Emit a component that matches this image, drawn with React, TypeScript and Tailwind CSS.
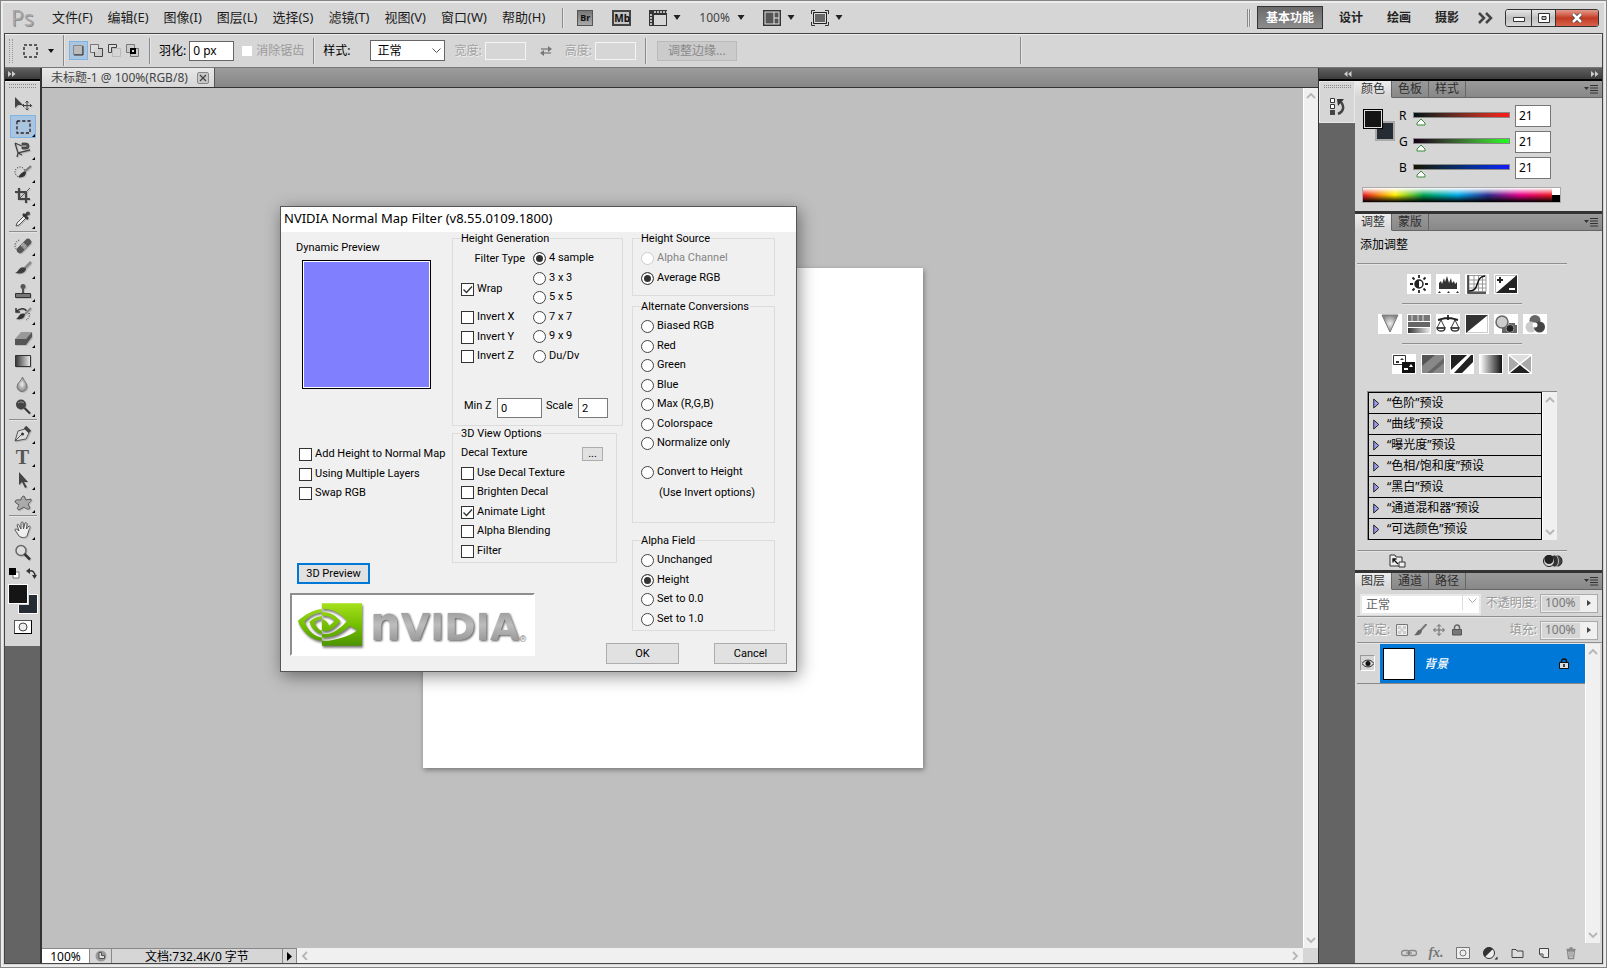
import React from "react";
import clsx from "clsx";

type IconProps = { children: React.ReactNode; w?: number; h?: number; className?: string };

function Icon({ children, w = 18, h = 18, className }: IconProps) {
  return (
    <svg width={w} height={h} viewBox={`0 0 ${w} ${h}`} fill="none" className={clsx("shrink-0", className)} aria-hidden="true">
      {children}
    </svg>
  );
}

function Arrow() {
  return (
    <Icon w={8} h={5}>
      <path d="M0.5 0h7L4 5z" fill="#222" />
    </Icon>
  );
}

function Divider({ className }: { className?: string }) {
  return <div className={clsx("w-[2px] shrink-0 border-l border-[#8a8a8a] bg-[#e6e6e6]", className)} />;
}

function Rule({ className }: { className?: string }) {
  return <div className={clsx("h-[2px] shrink-0 border-t border-[#8f8f8f] bg-[#e4e4e4]", className)} />;
}

const menus = ["文件(F)", "编辑(E)", "图像(I)", "图层(L)", "选择(S)", "滤镜(T)", "视图(V)", "窗口(W)", "帮助(H)"];

function MenuBar() {
  return (
    <header className="flex h-[31px] shrink-0 items-center pl-[7px] text-[13px] text-[#1c1c1c]">
      <span className="w-[41px] font-['Open_Sans'] text-[21px] leading-6 text-[#a9a9a9] [text-shadow:1px_1px_0_#8b8b8b]">Ps</span>
      <nav className="flex gap-[15px]">
        {menus.map((m) => (
          <button key={m} className="whitespace-nowrap">{m}</button>
        ))}
      </nav>
      <Divider className="ml-[17px] h-5" />
      <button aria-label="Bridge" className="ml-[13px] h-4 w-4 border border-[#555] bg-linear-to-b from-[#777] to-[#a9a9a9] text-[9px] leading-[14px] font-bold text-[#111]">Br</button>
      <button aria-label="Mini Bridge" className="ml-[19px] h-4 w-[19px] border-2 border-[#444] bg-[#c4c4c4] text-[10px] leading-3 font-bold text-[#111]">Mb</button>
      <button aria-label="查看额外内容" className="ml-[18px] flex items-center gap-1.5">
        <Icon h={16}>
          <path d="M0 0h18v16H0z" fill="#333" />
          <path d="M5 5h12v10H5z" fill="#d6d6d6" />
          <path d="M5 2h13M2 4v12" stroke="#bbb" strokeWidth="2" strokeDasharray="2 1" />
        </Icon>
        <Arrow />
      </button>
      <button className="ml-[18px] flex items-center gap-[7px] text-xs text-[#444]">100% <Arrow /></button>
      <button aria-label="排列文档" className="ml-[18px] flex items-center gap-1.5">
        <Icon h={16}>
          <path d="M.75.75h16.5v14.5H.75z" fill="#e8e8e8" stroke="#333" strokeWidth="1.5" />
          <path d="M2.500 2.500h8v11h-8zM11.500 2.500h4v5h-4zM11.500 8.500h4v5h-4z" fill="#555" />
        </Icon>
        <Arrow />
      </button>
      <button aria-label="屏幕模式" className="ml-4 flex items-center gap-1.5">
        <Icon h={16}>
          <path d="M.5 4V.5H4M14 .5h3.500V4M17.500 12v3.500H14M4 15.500H.5V12" stroke="#333" />
          <path d="M2.500 2.500h13v11h-13z" fill="#666" stroke="#222" />
          <path d="M3.500 3.500h11v9h-11z" stroke="#ddd" />
        </Icon>
        <Arrow />
      </button>
      <div className="ml-auto flex items-center text-xs font-bold text-[#222]">
        <Divider className="h-[18px]" />
        <Divider className="h-[18px]" />
        <button className="ml-[6px] h-[23px] w-[66px] border border-[#333] bg-linear-to-b from-[#6a6a6a] to-[#8d8d8d] text-white">基本功能</button>
        <button className="ml-4">设计</button>
        <button className="ml-6">绘画</button>
        <button className="ml-6">摄影</button>
        <button aria-label="更多" className="ml-[19px]">
          <Icon w={15} h={12}>
            <path d="M1 1l5 5-5 5M8 1l5 5-5 5" stroke="#444" strokeWidth="2.500" />
          </Icon>
        </button>
        <div className="mr-1 ml-3 flex h-[18px] overflow-hidden rounded-[3px] border border-[#333]">
          <button aria-label="最小化" className="flex w-[25px] items-center justify-center bg-linear-to-b from-[#e6e6e6] via-[#c0c0c0] to-[#d8d8d8] pt-1">
            <Icon w={12} h={5}><path d="M.5.5h11v4H.5z" fill="#fff" stroke="#333" /></Icon>
          </button>
          <button aria-label="还原" className="flex w-[25px] items-center justify-center border-x border-[#333] bg-linear-to-b from-[#e6e6e6] via-[#c0c0c0] to-[#d8d8d8]">
            <Icon w={12} h={10}><path d="M.5.5h11v9H.5zM4 3.500h4v3H4z" fill="#fff" stroke="#333" fillRule="evenodd" /></Icon>
          </button>
          <button aria-label="关闭" className="flex w-[42px] items-center justify-center bg-linear-to-b from-[#e39a8c] via-[#c13a22] to-[#d8624a]">
            <Icon w={12} h={10}>
              <path d="M2 1l8 8M10 1L2 9" stroke="#444" strokeWidth="4" />
              <path d="M2 1l8 8M10 1L2 9" stroke="#fff" strokeWidth="2.500" />
            </Icon>
          </button>
        </div>
      </div>
    </header>
  );
}

function OptionsBar() {
  return (
    <div className="flex h-[34px] shrink-0 items-center border-t border-[#444] bg-[#d6d6d6] pl-1 text-xs text-black shadow-[inset_0_1px_0_#eee]">
      <div className="h-6 w-1 border-x border-dotted border-[#999]" />
      <button aria-label="矩形选框工具" className="ml-[10px] flex items-center gap-2.5">
        <Icon w={15} h={14}><path d="M1 1h13v12H1z" stroke="#333" strokeWidth="1.500" strokeDasharray="3 2" /></Icon>
        <Icon w={6} h={4}><path d="M0 0h6L3 4z" fill="#111" /></Icon>
      </button>
      <Divider className="ml-[9px] h-[31px]" />
      <button aria-label="新选区" className="ml-1 flex h-[19px] w-[19px] items-center justify-center border border-[#7db4e4] bg-[#a9c5e0]">
        <Icon w={11} h={11}><path d="M.5.5h9v9h-9z" fill="#bbb" stroke="#888" /><path d="M10 1v9H1" stroke="#333" /></Icon>
      </button>
      <button aria-label="添加到选区" className="ml-[2px]">
        <Icon w={14} h={14}><path d="M.5.5h8v8h-8z" fill="#ddd" stroke="#777" /><path d="M4.500 4.500h8v8h-8z" fill="#ccc" stroke="#444" /><path d="M4 4h4v4H4z" fill="#d4d4d4" /></Icon>
      </button>
      <button aria-label="从选区减去" className="ml-1">
        <Icon w={14} h={14}><path d="M4.500 4.500h8v8h-8z" stroke="#bbb" /><path d="M8.500.5h-8v8h3v-5h5z" fill="#ddd" stroke="#444" /></Icon>
      </button>
      <button aria-label="与选区交叉" className="ml-1">
        <Icon w={14} h={14}><path d="M.5.5h8v8h-8zM4.500 4.500h8v8h-8z" fill="#ccc" stroke="#777" /><path d="M5 5h4v4H5z" fill="#ddd" stroke="#000" strokeWidth="2" /></Icon>
      </button>
      <Divider className="ml-[9px] h-[26px]" />
      <label className="ml-2 flex items-center gap-[3px]">
        羽化:
        <input defaultValue="0 px" className="h-5 w-[45px] border border-[#666] bg-white px-[3px]" />
      </label>
      <label className="ml-2 flex items-center gap-1 text-[#9a9a9a]">
        <input type="checkbox" disabled className="h-[10px] w-[10px] appearance-none bg-white" />
        消除锯齿
      </label>
      <Divider className="ml-[9px] h-[26px]" />
      <label className="ml-2 flex items-center">
        样式:
        <span className="relative ml-5">
          <select className="h-[21px] w-[75px] appearance-none border border-[#666] bg-white pl-1.5 text-xs">
            <option>正常</option>
          </select>
          <Icon w={9} h={6} className="pointer-events-none absolute top-2 right-1"><path d="M.5.5l4 4 4-4" stroke="#555" /></Icon>
        </span>
      </label>
      <label className="ml-[9px] flex items-center gap-[3px] text-[#a3a3a3] [text-shadow:1px_1px_0_#eee]">
        宽度:
        <input disabled className="h-[18px] w-[41px] border border-[#f4f4f4] bg-[#d6d6d6]" />
      </label>
      <button aria-label="高度和宽度互换" className="ml-[14px]">
        <Icon w={12} h={10}><path d="M1 3h8M1 7h10" stroke="#888" strokeWidth="1.500" /><path d="M8 0l4 3-4 3zM4 4L0 7l4 3z" fill="#777" /></Icon>
      </button>
      <label className="ml-[13px] flex items-center gap-[3px] text-[#a3a3a3] [text-shadow:1px_1px_0_#eee]">
        高度:
        <input disabled className="h-[18px] w-[41px] border border-[#f4f4f4] bg-[#d6d6d6]" />
      </label>
      <Divider className="ml-[9px] h-[26px]" />
      <button disabled className="ml-2.5 h-5 w-20 border border-[#bababa] bg-[#cbcbcb] text-[#8a8a8a]">调整边缘...</button>
      <Divider className="ml-[283px] h-[27px]" />
    </div>
  );
}

const shade = "drop-shadow-[1px_1px_0_#bbb]";

const tools: { name: string; draw: React.ReactNode }[][] = [
  [
    { name: "移动工具", draw: <><path d="M1 2v11l3-3h5z" fill="#444" /><path d="M13 6v9M8.500 10.500h9M11.500 7.500L13 6l1.500 1.500M11.500 13.500L13 15l1.500-1.500M10 9l-1.500 1.500L10 12M16 9l1.500 1.500L16 12" stroke="#444" /></> },
    { name: "矩形选框工具", draw: <path d="M3 3h13v12H3z" stroke="#223" strokeWidth="1.300" strokeDasharray="3.200 2" /> },
    { name: "磁性套索工具", draw: <><path d="M1 2l3 10 12-3M1 2l7 3M4 12l-1 4M4 12l4 2" stroke="#444" strokeWidth="1.300" /><path d="M8 2h4a3 3 0 010 6H8V6h4a1 1 0 000-2H8z" fill="#555" stroke="#333" strokeWidth=".7" /></> },
    { name: "快速选择工具", draw: <><circle cx="6" cy="8" r="5" stroke="#222" strokeDasharray="1 1.500" /><path d="M17 2l-7 6" stroke="#777" strokeWidth="2" /><path d="M12 8c0 5-5 6-8 5 2-1 3-6 8-5z" fill="#333" /></> },
    { name: "裁剪工具", draw: <><path d="M5 1v11h11M1 5h11v11" stroke="#444" strokeWidth="2.200" /><path d="M5 12L16 1" stroke="#555" /></> },
    { name: "吸管工具", draw: <><path d="M2 16l1-3 7-7 2 2-7 7z" fill="#eee" stroke="#555" /><path d="M9 4l5 5M11 6l3-3" stroke="#333" strokeWidth="2.500" /><circle cx="14" cy="3.500" r="2" fill="#444" /></> },
  ],
  [
    { name: "污点修复画笔工具", draw: <><path d="M7 14A5.500 5.500 0 016 3" stroke="#222" strokeDasharray="1 1.500" /><path d="M6 13l8-8" stroke="#555" strokeWidth="6.500" strokeLinecap="round" /><path d="M8.500 10.500l3-3" stroke="#aaa" strokeWidth="5.500" /><path d="M8.500 9l3 3M10 7.500l3 3" stroke="#555" strokeDasharray="1 1.200" /></> },
    { name: "画笔工具", draw: <><path d="M17 2l-6 6" stroke="#888" strokeWidth="2.500" /><path d="M12 8c0 6-7 6-11 5 4-1 4-8 11-5z" fill="#3c3c3c" /></> },
    { name: "仿制图章工具", draw: <><circle cx="9" cy="3.500" r="2.500" fill="#555" /><path d="M8 5h2v5H8z" fill="#555" /><path d="M1.500 10.500h15v4h-15z" fill="#777" stroke="#333" /></> },
    { name: "历史记录画笔工具", draw: <><path d="M3 5c4-4 9-2 9 0M2 2v4h4" stroke="#333" strokeWidth="1.500" /><path d="M17 2l-6 6" stroke="#888" strokeWidth="2" /><path d="M11 8c0 5-6 6-9 5 3-1 3-7 9-5z" fill="#333" /><path d="M15 7c1 4-1 6-3 7" stroke="#222" strokeDasharray="1 1.500" /></> },
    { name: "橡皮擦工具", draw: <><path d="M1 10l6-7h11l-6 7z" fill="#999" /><path d="M1 10h11v6H1zM12 10l6-7v5l-6 8z" fill="#555" /></> },
    { name: "渐变工具", draw: <path d="M1.500 3.500h15v11h-15z" fill="url(#toolGrad)" stroke="#333" /> },
    { name: "模糊工具", draw: <path d="M8.500 2c1 4 4.500 6 4.500 9.500a4.500 4.500 0 01-10 0C3 8 7.500 6 8.500 2z" fill="url(#ball)" stroke="#777" /> },
    { name: "减淡工具", draw: <><circle cx="7" cy="6.500" r="5" fill="#444" /><path d="M10.500 10l5.500 5.500" stroke="#333" strokeWidth="2" /><path d="M4 5a4 3 0 016 0" stroke="#999" /></> },
  ],
  [
    { name: "钢笔工具", draw: <><path d="M1 16l3-10 7-2 4 4-3 6z" fill="#ddd" stroke="#555" /><path d="M1 16l7-7" stroke="#555" /><circle cx="8.500" cy="9" r="1.500" fill="#333" /><path d="M11 2l5 5" stroke="#444" strokeWidth="3.500" /></> },
    { name: "横排文字工具", draw: null },
    { name: "路径选择工具", draw: <path d="M5 1v13l3-3 3 6 2-1-3-5h4z" fill="#444" /> },
    { name: "自定形状工具", draw: <path d="M10 2l2 4 5-1c1 2-2 4-3 5l2 4c-1 2-4 1-6-1l-5 3c-3-1-1-3 0-5L1 8c0-3 4-2 6-2 0-2 1-4 3-4z" fill="#aaa" stroke="#555" /> },
  ],
  [
    { name: "抓手工具", draw: <path d="M5 15l-4-6c0-2 2-1 4 1L3 4c1-2 2 0 4 4V2c1-2 2-1 2 0l.5 6L11 2c1-1 2 0 2 1l-.5 5L15 5c2 0 1 2 0 4l-2 6c-1 2-6 2-8 0z" fill="#eee" stroke="#555" /> },
    { name: "缩放工具", draw: <><circle cx="7" cy="6.500" r="5" fill="#ddd" stroke="#666" strokeWidth="1.500" /><path d="M10.500 10l5.500 5.500" stroke="#333" strokeWidth="2.500" /></> },
  ],
];

function Toolbox() {
  return (
    <aside className="flex w-[37px] shrink-0 flex-col border-r-2 border-[#333] bg-[#646464]">
      <div className="flex h-[13px] shrink-0 items-center border-b-2 border-black bg-linear-to-b from-[#606060] to-[#3c3c3c] pl-[3px]">
        <Icon w={8} h={6}><path d="M0 0l3.500 3L0 6zM4 0l3.500 3L4 6z" fill="#ccc" /></Icon>
      </div>
      <div className="flex flex-col items-center border-t border-[#eee] bg-[#d6d6d6] pb-3">
        <div className="mt-[2px] mb-1 h-1 w-[27px] border-y border-dotted border-[#888]" />
        {tools.map((group, g) => (
          <React.Fragment key={g}>
            {g > 0 && <Rule className="my-px w-7" />}
            {group.map((tool, i) => (
              <button
                key={tool.name}
                aria-label={tool.name}
                className={clsx(
                  "relative flex h-[23px] w-[26px] items-center justify-center border",
                  g === 0 && i === 1 ? "border-[#7db4e4] bg-[#a9c5e0]" : "border-transparent",
                )}
              >
                {tool.draw ? (
                  <Icon className={shade}>{tool.draw}</Icon>
                ) : (
                  <span className="font-['Liberation_Serif'] text-[20px] leading-5 font-bold text-[#555]">T</span>
                )}
                {!(g === 0 && i === 0) && !(g === 3 && i === 1) && (
                  <Icon w={3} h={3} className="absolute right-0 bottom-0"><path d="M3 0v3H0z" fill="#000" /></Icon>
                )}
              </button>
            ))}
          </React.Fragment>
        ))}
        <div className="mt-1 flex w-7 justify-between">
          <Icon w={11} h={11}><path d="M4 4h6v6H4z" fill="#fff" stroke="#777" /><path d="M0 0h7v7H0z" fill="#000" /></Icon>
          <Icon w={11} h={11}><path d="M2 3c5-1 7 1 7 6" stroke="#333" strokeWidth="1.500" /><path d="M4 0v6L0 3zM6 7h5l-2.500 4z" fill="#333" /></Icon>
        </div>
        <div className="mt-[5px] grid h-[30px] w-[30px]">
          <div className="col-start-1 row-start-1 h-5 w-5 self-end justify-self-end border border-white bg-[#262c34]" />
          <div className="z-10 col-start-1 row-start-1 h-5 w-5 border border-white bg-[#151515] outline outline-[#d6d6d6]" />
        </div>
        <button aria-label="以快速蒙版模式编辑" className="mt-[6px] flex h-3.5 w-[18px] items-center justify-center border border-[#555] border-r-black border-b-black bg-white">
          <Icon w={10} h={10}><circle cx="5" cy="5" r="4" fill="#eee" stroke="#444" /></Icon>
        </button>
      </div>
    </aside>
  );
}

function Chevron({ dir }: { dir: "up" | "down" | "left" | "right" }) {
  const d = { up: "M1 6l4-4 4 4", down: "M1 3l4 4 4-4", left: "M7 1L3 5l4 4", right: "M3 1l4 4-4 4" }[dir];
  return <Icon w={10} h={9}><path d={d} stroke="#b5b5b5" strokeWidth="1.800" /></Icon>;
}

function ScrollBar({ className }: { className?: string }) {
  return (
    <div className={clsx("flex w-[15px] shrink-0 flex-col items-center justify-between border-l border-white bg-[#f0f0f0] py-1", className)}>
      <Chevron dir="up" />
      <Chevron dir="down" />
    </div>
  );
}

function DocumentArea() {
  return (
    <main className="flex min-w-0 flex-1 flex-col border-r border-[#333]">
      <div className="flex h-[20px] shrink-0 border-b border-[#333] bg-linear-to-b from-[#9c9c9c] to-[#868686]">
        <div className="flex w-[173px] items-center justify-between border-r border-[#555] bg-linear-to-b from-[#e8e8e8] to-[#d6d6d6] pr-[5px] pl-[9px] text-xs text-[#444]">
          <span className="whitespace-nowrap">未标题-1 @ 100%(RGB/8)</span>
          <button aria-label="关闭文档" className="flex h-3 w-3 shrink-0 items-center justify-center rounded-[2px] border border-[#888] bg-[#c8c8c8]">
            <Icon w={8} h={8}><path d="M1 1l6 6M7 1L1 7" stroke="#444" strokeWidth="1.300" /></Icon>
          </button>
        </div>
      </div>
      <div className="flex min-h-0 flex-1">
        <div className="flex flex-1 items-center justify-center bg-[#bfbfbf]">
          <div className="h-[500px] w-[500px] bg-white shadow-[1px_2px_5px_#777]" />
        </div>
        <ScrollBar />
      </div>
      <footer className="flex h-[15px] shrink-0 items-stretch bg-[#f0f0f0] text-xs leading-[15px] text-black">
        <input aria-label="缩放" defaultValue="100%" className="w-[48px] border-t border-r border-[#888] bg-white text-center" />
        <button aria-label="Version Cue" className="flex w-[22px] items-center justify-center border-t border-r border-[#888] bg-[#d6d6d6]">
          <Icon w={12} h={12}><circle cx="6" cy="6" r="5.500" fill="#999" /><path d="M4 2.500h2.500v3h3v3H4z" fill="#ddd" stroke="#555" /></Icon>
        </button>
        <div className="w-[171px] border-t border-r border-[#888] bg-[#d6d6d6] text-center">文档:732.4K/0 字节</div>
        <button aria-label="状态栏选项" className="flex w-[14px] items-center justify-center border-t border-r border-[#888] bg-[#d6d6d6]">
          <Icon w={5} h={9}><path d="M0 0l5 4.500L0 9z" fill="#000" /></Icon>
        </button>
        <div className="flex flex-1 items-center justify-between px-[3px]">
          <Chevron dir="left" />
          <Chevron dir="right" />
        </div>
        <div className="w-[15px] bg-[#d6d6d6]" />
      </footer>
    </main>
  );
}

function PanelTabs({ tabs }: { tabs: string[] }) {
  return (
    <div className="flex h-[17px] shrink-0 items-stretch bg-linear-to-b from-[#9a9a9a] to-[#878787] text-xs leading-4">
      {tabs.map((tab, i) => (
        <button
          key={tab}
          className={clsx(
            "w-[37px] border-r border-b border-r-[#666]",
            i === 0 ? "border-b-[#d6d6d6] bg-linear-to-b from-[#eee] to-[#d6d6d6] text-[#333]" : "border-b-[#666] text-[#2e2e2e]",
          )}
        >
          {tab}
        </button>
      ))}
      <div className="flex flex-1 items-center justify-end border-b border-[#666] pr-1">
        <Icon w={14} h={9}><path d="M0 2h5L2.500 5z" fill="#333" /><path d="M6 .5h8M6 3h8M6 5.500h8M6 8h8" stroke="#333" /></Icon>
      </div>
    </div>
  );
}

const channels = [
  { name: "R", bar: "from-[#001515] to-[#ff1515]" },
  { name: "G", bar: "from-[#150015] to-[#15ff15]" },
  { name: "B", bar: "from-[#151500] to-[#1515ff]" },
];

function ColorPanel() {
  return (
    <section>
      <PanelTabs tabs={["颜色", "色板", "样式"]} />
      <div className="flex pt-[7px] pl-2">
        <div className="mt-1 grid h-8 w-8">
          <div className="col-start-1 row-start-1 h-5 w-5 self-end justify-self-end border-2 border-[#aaa] bg-[#262c34]" />
          <div className="z-10 col-start-1 row-start-1 h-5 w-5 border border-black bg-[#151515] shadow-[inset_0_0_0_1px_#ddd]" />
        </div>
        <div className="ml-1 flex flex-col gap-1">
          {channels.map((c) => (
            <label key={c.name} className="flex h-[22px] items-center text-xs text-black">
              <span className="w-[14px]">{c.name}</span>
              <span className="flex w-[97px] flex-col pt-[5px]">
                <span className={clsx("h-[6px] border border-[#888] bg-linear-to-r", c.bar)} />
                <Icon w={10} h={8} className="ml-[3px]"><path d="M5 1l4 4v2H1V5z" fill="#fff" stroke="#3b8a3b" /></Icon>
              </span>
              <input defaultValue="21" className="ml-[5px] h-[22px] w-9 border border-[#777] bg-white pb-0.5 pl-[3px]" />
            </label>
          ))}
        </div>
      </div>
      <div className="my-2 ml-[7px] flex h-[16px] w-[199px] border border-[#aaa]">
        <div className="flex-1 bg-[linear-gradient(to_bottom,white,transparent_50%,black),linear-gradient(to_right,#ed1c24,#fff200_17%,#00a651_32%,#00aeef_50%,#2e3192_66%,#ec008c_83%,#ed1c24)]" />
        <div className="w-2 bg-linear-to-b from-white from-50% to-black to-50%" />
      </div>
    </section>
  );
}

const adjustments: { name: string; draw: React.ReactNode }[][] = [
  [
    { name: "亮度/对比度", draw: <><circle cx="12" cy="10" r="4" fill="#fff" stroke="#222" strokeWidth="1.500" /><path d="M12 6a4 4 0 000 8z" fill="#222" /><path d="M12 1v3M12 16v3M3 10h3M18 10h3M5.500 3.500l2 2M16.500 14.500l2 2M18.500 3.500l-2 2M7.500 14.500l-2 2" stroke="#222" strokeWidth="1.800" /></> },
    { name: "色阶", draw: <><path d="M3 15V9l2-2 1 3 2-6 1 4 2-6 2 7 2-5 1 5 2-2 1 3 2-2v7z" fill="#333" /><path d="M2 19l1.500-2L5 19zM11 19l1.500-2 1.500 2zM20 19l1.500-2 1.500 2z" fill="#333" /></> },
    { name: "曲线", draw: <><path d="M4 1.500h17v16H4zM9 1v17M13.500 1v17M17.500 1v17M4 6h17M4 10h17M4 14h17" stroke="#999" /><path d="M4 17c12 0 5-14 16-15" stroke="#111" strokeWidth="1.500" /><path d="M3 1v18h18" stroke="#222" strokeWidth="1.500" /></> },
    { name: "曝光度", draw: <><path d="M1.500 1.500h21v17h-21z" stroke="#bbb" /><path d="M23 1v18H2z" fill="#222" /><path d="M3 6h6M6 3v6" stroke="#222" strokeWidth="2" /><path d="M15 15h6" stroke="#fff" strokeWidth="2" /></> },
  ],
  [
    { name: "自然饱和度", draw: <path d="M4 1h16l-8 17z" fill="url(#ball)" stroke="#777" /> },
    { name: "色相/饱和度", draw: <><path d="M1 1h22v6H1z" fill="#777" /><path d="M5 1v6M11 1v6M16 1v6" stroke="#aaa" strokeWidth="2" /><path d="M1 8h22v5H1z" fill="#666" /><path d="M1 14h22v5H1z" fill="url(#toolGrad)" /></> },
    { name: "色彩平衡", draw: <><path d="M12 1v5M2 6c5-1 5-2 10-2s5 1 10 2" stroke="#222" strokeWidth="1.800" /><path d="M5 6l-4 8h8zM19 6l-4 8h8z" stroke="#333" /><path d="M1 14h8c0 4-8 4-8 0zM15 14h8c0 4-8 4-8 0z" stroke="#333" strokeWidth="1.300" /></> },
    { name: "黑白", draw: <><path d="M1.500 1.500h21v17h-21z" fill="#fff" stroke="#ccc" /><path d="M1 1h22L1 19z" fill="#333" /></> },
    { name: "照片滤镜", draw: <><path d="M8 11h15v8H8zM15 9h6v3h-6z" fill="#666" /><circle cx="8" cy="8" r="6" fill="#ccc" stroke="#666" strokeWidth="1.500" /><circle cx="16" cy="14.500" r="4" fill="#222" stroke="#999" /></> },
    { name: "通道混合器", draw: <><circle cx="12" cy="6.500" r="5.500" fill="#666" /><circle cx="8" cy="13" r="5.500" fill="#ccc" /><circle cx="16.500" cy="13" r="5.500" fill="#444" /><circle cx="12" cy="11" r="2.500" fill="#fff" /></> },
  ],
  [
    { name: "反相", draw: <><path d="M1.500 1.500h12v9h-12z" fill="#fff" stroke="#333" /><path d="M4 7h3v2H4zM8 6l2-2 2 2z" fill="#333" /><path d="M10 8h13v11H10z" fill="#111" /><path d="M12 14h4v2h-4zM17 13l2-3 2 3z" fill="#fff" /></> },
    { name: "色调分离", draw: <><path d="M1 1h22v18H1z" fill="#888" /><path d="M1 1h13L1 12z" fill="#555" /><path d="M23 4v5L11 19H6z" fill="#666" /></> },
    { name: "阈值", draw: <><path d="M1 1h16L1 16zM21 1h2v7L12 19H4z" fill="#222" /></> },
    { name: "渐变映射", draw: <path d="M1 1h22v18H1z" fill="url(#mapGrad)" /> },
    { name: "可选颜色", draw: <><path d="M1 1h22v18H1z" fill="#aaa" /><path d="M1 19l11-9 11 9z" fill="#222" /><path d="M1 1h22l-11 9z" fill="#ddd" /><path d="M1 1l22 18M23 1L1 19" stroke="#fff" strokeWidth="1.500" /></> },
  ],
];

const presets = ["“色阶”预设", "“曲线”预设", "“曝光度”预设", "“色相/饱和度”预设", "“黑白”预设", "“通道混和器”预设", "“可选颜色”预设"];

function AdjustmentsPanel() {
  return (
    <section className="border-t-[3px] border-[#333]">
      <PanelTabs tabs={["调整", "蒙版"]} />
      <div className="ml-[2px] flex w-[210px] flex-col items-center">
        <h2 className="mt-1.5 w-full pl-[3px] text-xs leading-4 text-black">添加调整</h2>
        <Rule className="mt-[10px] mb-[9px] w-full" />
        {adjustments.map((row, r) => (
          <React.Fragment key={r}>
            {r > 0 && <Rule className="my-[9px] w-[120px]" />}
            <div className="flex gap-[5px]">
              {row.map((a) => (
                <button key={a.name} aria-label={a.name} className="bg-white">
                  <Icon w={24} h={20}>{a.draw}</Icon>
                </button>
              ))}
            </div>
          </React.Fragment>
        ))}
        <div className="mt-[17px] flex w-[190px] border-t border-l border-[#888]">
          <ul className="flex-1 border border-black">
            {presets.map((p) => (
              <li key={p} className="border-b border-black last:border-b-0">
                <button className="flex h-5 w-full items-center gap-[7px] pl-1 text-left text-xs whitespace-nowrap text-black">
                  <Icon w={7} h={11}><path d="M.75 1v9l5-4.500z" fill="#9a9af0" stroke="#222" /></Icon>
                  {p}
                </button>
              </li>
            ))}
          </ul>
          <ScrollBar />
        </div>
        <Rule className="mt-[10px] w-full" />
        <div className="flex h-[18px] w-full items-center justify-between pr-1 pl-8">
          <Icon w={17} h={14}><path d="M1 1h5l1 2h6v9H1z" fill="#eee" stroke="#333" /><path d="M4 5l5 5M4 8.500V5h3.500" stroke="#111" strokeWidth="1.300" /><path d="M10 8h6v5h-6z" fill="#eee" stroke="#333" /></Icon>
          <Icon w={20} h={14}><ellipse cx="15" cy="7" rx="4" ry="5" fill="#444" stroke="#222" /><ellipse cx="11.500" cy="7" rx="4" ry="6" fill="#333" stroke="#bbb" /><circle cx="6" cy="7" r="5.500" fill="#ddd" stroke="#222" /><circle cx="6" cy="5.500" r="4.500" fill="#222" /></Icon>
        </div>
      </div>
    </section>
  );
}

function Percent({ label }: { label: string }) {
  return (
    <label className="ml-auto flex items-center gap-[3px] text-xs text-[#999] [text-shadow:1px_1px_0_#fff]">
      {label}
      <span className="flex h-[19px] w-[58px] border border-[#aaa] bg-[#f0f0f0]">
        <input defaultValue="100%" className="w-10 border border-[#eee] bg-[#d6d6d6] pl-[3px] text-[#777]" />
        <span className="flex flex-1 items-center justify-center">
          <Icon w={4} h={6}><path d="M0 0l4 3-4 3z" fill="#444" /></Icon>
        </span>
      </span>
    </label>
  );
}

const layerActions: { name: string; draw: React.ReactNode }[] = [
  { name: "链接图层", draw: <><rect x=".5" y="4.500" width="8" height="5" rx="2.500" stroke="#888" strokeWidth="1.300" /><rect x="7.500" y="4.500" width="8" height="5" rx="2.500" stroke="#888" strokeWidth="1.300" /><path d="M5 7h6" stroke="#777" /></> },
  { name: "添加图层样式", draw: null },
  { name: "添加图层蒙版", draw: <><path d="M1.500 1.500h13v11h-13z" fill="#eee" stroke="#777" /><circle cx="8" cy="7" r="3" stroke="#777" /></> },
  { name: "创建新的填充或调整图层", draw: <><circle cx="7" cy="7" r="5.500" fill="#eee" stroke="#333" /><path d="M3 11l8-8a5.500 5.500 0 00-8 8z" fill="#333" /><path d="M15.500 10.500v3h-3z" fill="#222" /></> },
  { name: "创建新组", draw: <path d="M3 3.500h4l1 1.500h6v6.500H3z" fill="#ddd" stroke="#444" /> },
  { name: "创建新图层", draw: <path d="M3.500 2.500h9v9H7L3.500 8zM3.500 8H7v3.500" fill="#eee" stroke="#444" /> },
  { name: "删除图层", draw: <><path d="M4.500 5h7l-1 7.500h-5zM3.500 3.500h9M6.500 2h3" stroke="#888" strokeWidth="1.300" /><path d="M7 6v5M9 6v5" stroke="#888" /></> },
];

function LayersPanel() {
  return (
    <section className="flex min-h-0 flex-1 flex-col border-t-[3px] border-[#333]">
      <PanelTabs tabs={["图层", "通道", "路径"]} />
      <div className="flex h-[26px] items-center pr-1 pl-[5px]">
        <span className="relative">
          <select aria-label="混合模式" disabled className="h-[21px] w-[121px] appearance-none border-2 border-[#e8e8e8] bg-white pl-1 text-xs text-[#666] opacity-100">
            <option>正常</option>
          </select>
          <span className="pointer-events-none absolute top-0.5 right-0 flex h-[17px] w-[19px] items-center justify-center border-l border-[#ddd]">
            <Icon w={9} h={6}><path d="M.5.5l4 4 4-4" stroke="#aaa" /></Icon>
          </span>
        </span>
        <Percent label="不透明度:" />
      </div>
      <Rule className="ml-[2px]" />
      <div className="flex h-6 items-center pr-1 pl-2 text-xs text-[#999]">
        <span className="[text-shadow:1px_1px_0_#fff]">锁定:</span>
        <div className="ml-[6px] flex items-center gap-[6px]">
          <button aria-label="锁定透明像素"><Icon w={12} h={12}><path d="M.5.5h11v11H.5z" fill="#eee" stroke="#777" /><path d="M2 2h3v3H2zM7 2h3v3H7zM4.500 4.500h3v3h-3zM2 7h3v3H2zM7 7h3v3H7z" fill="#ccc" /></Icon></button>
          <button aria-label="锁定图像像素"><Icon w={13} h={12}><path d="M12.500 0L7 6" stroke="#777" strokeWidth="2" /><path d="M8 6c0 5-5 6-8 5 3-1 3-7 8-5z" fill="#666" /></Icon></button>
          <button aria-label="锁定位置"><Icon w={12} h={12}><path d="M6 1v10M1 6h10M4 2.500L6 .5l2 2M4 9.500l2 2 2-2M2.500 4l-2 2 2 2M9.500 4l2 2-2 2" stroke="#666" /></Icon></button>
          <button aria-label="锁定全部"><Icon w={12} h={12}><path d="M3.500 6V3.500a2.500 2.500 0 015 0V6" stroke="#666" strokeWidth="1.500" /><path d="M1.500 5.500h9V11h-9z" fill="#777" stroke="#555" /></Icon></button>
        </div>
        <Percent label="填充:" />
      </div>
      <Rule className="ml-[2px]" />
      <div className="ml-[2px] flex min-h-0 flex-1">
        <div className="flex-1">
          <div className="flex h-10 items-stretch border-b border-[#888]">
            <button aria-label="指示图层可见性" className="mt-[11px] mr-[5px] ml-[3px] flex h-4 w-[15px] items-center justify-center border border-[#999] border-r-white border-b-white">
              <Icon w={12} h={9}><path d="M0 4.500C3 0 9 0 12 4.500 9 9 3 9 0 4.500z" fill="#ddd" stroke="#222" /><circle cx="6" cy="4.500" r="2.500" fill="#111" /></Icon>
            </button>
            <div className="flex flex-1 items-center bg-[#0078d7] pr-4 pl-[3px] text-white">
              <span className="h-8 w-8 border border-black bg-white" />
              <span className="ml-[9px] text-xs font-medium italic">背景</span>
              <Icon w={10} h={11} className="ml-auto"><path d="M2.500 5V3.500a2.500 2.500 0 015 0V5" stroke="#111" strokeWidth="1.500" /><path d="M.5 4.500h9v6h-9z" fill="#ddd" stroke="#111" /><path d="M5 6v3" stroke="#111" strokeWidth="1.500" /></Icon>
            </div>
          </div>
        </div>
        <ScrollBar className="mr-[2px]" />
      </div>
      <div className="flex h-5 shrink-0 items-center gap-[11px] pl-[46px]">
        {layerActions.map((a) => (
          <button key={a.name} aria-label={a.name} className="flex h-4 w-4 items-center justify-center">
            {a.draw ? (
              <Icon w={16} h={15}>{a.draw}</Icon>
            ) : (
              <span className="font-['Liberation_Serif'] text-sm leading-4 font-bold text-[#777] italic">fx.</span>
            )}
          </button>
        ))}
      </div>
    </section>
  );
}

function Dock() {
  return (
    <aside className="flex w-[283px] shrink-0 flex-col">
      <div className="flex h-[13px] shrink-0 items-center border-b-2 border-black bg-linear-to-b from-[#606060] to-[#3c3c3c] pr-[3px] pl-[25px]">
        <Icon w={8} h={6}><path d="M3.500 0L0 3l3.500 3zM7.500 0L4 3l3.500 3z" fill="#ccc" /></Icon>
        <Icon w={8} h={6} className="ml-auto"><path d="M0 0l3.500 3L0 6zM4 0l3.500 3L4 6z" fill="#ccc" /></Icon>
      </div>
      <div className="flex min-h-0 flex-1">
        <div className="w-9 shrink-0 bg-[#646464]">
          <div className="flex h-[42px] flex-col items-center border border-[#e8e8e8] bg-[#d6d6d6]">
            <div className="mt-[3px] h-[3px] w-[27px] border-y border-dotted border-[#888]" />
            <button aria-label="历史记录" className="mt-2.5">
              <Icon w={16} h={17}><path d="M1.500.5h4v4h-4zM1.500 6.500h4v4h-4z" fill="#fff" stroke="#333" /><path d="M1 12h5v5H1z" fill="#444" /><path d="M9 16c5-2 7-7 3-12" stroke="#444" strokeWidth="2.500" /><path d="M8 1h7l-6 7z" fill="#333" /></Icon>
            </button>
          </div>
        </div>
        <div className="flex min-w-0 flex-1 flex-col bg-[#d6d6d6]">
          <ColorPanel />
          <AdjustmentsPanel />
          <LayersPanel />
        </div>
      </div>
    </aside>
  );
}

function Check({ label, checked }: { label: string; checked?: boolean }) {
  return (
    <label className="flex items-center gap-[3px] whitespace-nowrap odd:h-[19px] even:h-5">
      <span className="relative flex">
        <input type="checkbox" defaultChecked={checked} className="peer h-[13px] w-[13px] appearance-none border border-[#333] bg-white" />
        <Icon w={13} h={13} className="pointer-events-none absolute inset-0 hidden peer-checked:block"><path d="M2.500 6.500l3 3 5.500-6" stroke="#333" strokeWidth="1.400" /></Icon>
      </span>
      {label}
    </label>
  );
}

function Radio({ label, name, checked, disabled }: { label: string; name: string; checked?: boolean; disabled?: boolean }) {
  return (
    <label className={clsx("flex items-center gap-[3px] whitespace-nowrap odd:h-[19px] even:h-5", disabled && "text-[#838383]")}>
      <input
        type="radio"
        name={name}
        defaultChecked={checked}
        disabled={disabled}
        className="h-[13px] w-[13px] appearance-none rounded-full border border-[#444] bg-white checked:bg-[#333] checked:shadow-[inset_0_0_0_2px_#fff] disabled:border-[#ccc]"
      />
      {label}
    </label>
  );
}

function Group({ title, className, children }: { title: string; className: string; children: React.ReactNode }) {
  return (
    <fieldset className={clsx("border border-[#dcdcdc] pl-2", className)}>
      <legend className="h-[13px] pr-px leading-[14px]">{title}</legend>
      {children}
    </fieldset>
  );
}

function NvidiaLogo() {
  return (
    <div className="flex h-[63px] w-[245px] shrink-0 items-center border-2 border-[#8e8e8e] border-r-white border-b-white bg-white pl-[6px]">
      <svg width="64" height="43" viewBox="0 4 24 16" className="shrink-0 drop-shadow-[1px_2px_1px_#777]" aria-hidden="true">
        <path
          fill="url(#nvGreen)"
          d="M8.948 8.798v-1.430a6.700 6.700 0 0 1 .424-.018c3.922-.124 6.493 3.374 6.493 3.374s-2.774 3.851-5.750 3.851c-.398 0-.787-.062-1.158-.185v-4.346c1.528.185 1.837.857 2.747 2.385l2.040-1.714s-1.492-1.952-4-1.952a6.016 6.016 0 0 0-.796.035m0-4.735v2.138l.424-.027c5.450-.185 9.010 4.470 9.010 4.470s-4.080 4.964-8.330 4.964c-.370 0-.733-.035-1.095-.097v1.325c.300.035.610.062.910.062 3.957 0 6.820-2.023 9.593-4.408.459.371 2.340 1.263 2.730 1.652-2.633 2.208-8.772 3.984-12.253 3.984-.335 0-.653-.018-.971-.053v1.864H24V4.063zm0 10.326v1.131c-3.657-.654-4.673-4.460-4.673-4.460s1.758-1.944 4.673-2.262v1.237H8.940c-1.528-.186-2.730 1.245-2.730 1.245s.680 2.412 2.739 3.110M2.456 10.900s2.164-3.197 6.500-3.533V6.201C4.153 6.590 0 10.653 0 10.653s2.350 6.802 8.948 7.420v-1.237c-4.840-.600-6.492-5.936-6.492-5.936z"
        />
      </svg>
      <span className="ml-2 bg-linear-to-b from-[#777] via-[#bdbdbd] to-[#7a7a7a] bg-clip-text font-['DejaVu_Sans'] text-[38px] leading-[56px] font-bold text-transparent drop-shadow-[1px_1px_1px_#555]">
        <span className="font-['DejaVu_Sans_Condensed'] text-[48px]">n</span>VIDIA
      </span>
      <span className="self-end pb-2 text-[9px] text-[#888]">®</span>
    </div>
  );
}

const buttonStyle = "h-[21px] w-[73px] border border-[#adadad] bg-[#e1e1e1] pt-px text-center";

function NormalMapDialog() {
  return (
    <div role="dialog" aria-labelledby="dialog-title" className="absolute top-[205px] left-[279px] flex h-[466px] w-[517px] flex-col border border-[#555] bg-[#f0f0f0] font-[Roboto] text-[11px] text-black shadow-[2px_4px_16px_rgba(0,0,0,0.45)]">
      <h1 id="dialog-title" className="h-[25px] shrink-0 bg-white pl-[3px] font-['Noto_Sans'] text-[13px] leading-[23px]">NVIDIA Normal Map Filter (v8.55.0109.1800)</h1>
      <div className="flex flex-1">
        <div className="flex w-[171px] flex-col items-start pl-[9px]">
          <p className="mt-2 ml-[6px] h-[15px]">Dynamic Preview</p>
          <div className="mt-[5px] ml-3 h-[129px] w-[129px] border border-black bg-[#8080ff] shadow-[inset_0_0_0_1px_#fff]" />
          <div className="mt-14 ml-[9px]">
            <Check label="Add Height to Normal Map" />
            <Check label="Using Multiple Layers" />
            <Check label="Swap RGB" />
          </div>
          <button className="mt-[60px] mb-[9px] ml-[7px] h-[21px] w-[73px] border-2 border-[#0078d7] bg-[#e1e1e1] pt-px">3D Preview</button>
          <NvidiaLogo />
        </div>
        <div className="flex flex-1 flex-col">
          <div className="flex">
            <div className="w-[180px]">
              <Group title="Height Generation" className="h-[194px] w-[171px]">
                <div className="flex pt-1">
                  <div className="w-[72px]">
                    <p className="mb-[10px] h-5 pr-2 text-right leading-5 whitespace-nowrap">Filter Type</p>
                    <Check label="Wrap" checked />
                    <div className="mt-[9px]">
                      <Check label="Invert X" />
                      <Check label="Invert Y" />
                      <Check label="Invert Z" />
                    </div>
                  </div>
                  <div>
                    <Radio name="filter" label="4 sample" checked />
                    <Radio name="filter" label="3 x 3" />
                    <Radio name="filter" label="5 x 5" />
                    <Radio name="filter" label="7 x 7" />
                    <Radio name="filter" label="9 x 9" />
                    <Radio name="filter" label="Du/Dv" />
                  </div>
                </div>
                <div className="mt-8 flex items-start pl-[3px]">
                  <label htmlFor="min-z" className="w-[33px]">Min Z</label>
                  <input id="min-z" defaultValue="0" className="h-5 w-[45px] border border-[#7a7a7a] bg-white px-[3px]" />
                  <label htmlFor="scale" className="w-9 pl-1">Scale</label>
                  <input id="scale" defaultValue="2" className="h-5 w-[30px] border border-[#7a7a7a] bg-white px-[3px]" />
                </div>
              </Group>
              <Group title="3D View Options" className="mt-px h-[136px] w-[165px]">
                <div className="pt-1">
                  <div className="flex h-[19px] items-center justify-between pr-[13px]">
                    Decal Texture
                    <button aria-label="Browse decal texture" className="h-3.5 w-[21px] border border-[#adadad] bg-[#e1e1e1] leading-3">...</button>
                  </div>
                  <Check label="Use Decal Texture" />
                  <Check label="Brighten Decal" />
                  <Check label="Animate Light" checked />
                  <Check label="Alpha Blending" />
                  <Check label="Filter" />
                </div>
              </Group>
            </div>
            <div className="w-[143px]">
              <Group title="Height Source" className="h-16">
                <div className="pt-1">
                  <Radio name="source" label="Alpha Channel" disabled />
                  <Radio name="source" label="Average RGB" checked />
                </div>
              </Group>
              <Group title="Alternate Conversions" className="mt-1 h-[223px]">
                <div className="pt-1">
                  <Radio name="conversion" label="Biased RGB" />
                  <Radio name="conversion" label="Red" />
                  <Radio name="conversion" label="Green" />
                  <Radio name="conversion" label="Blue" />
                  <Radio name="conversion" label="Max (R,G,B)" />
                  <Radio name="conversion" label="Colorspace" />
                  <Radio name="conversion" label="Normalize only" />
                </div>
                <div className="mt-[10px]">
                  <Radio name="conversion" label="Convert to Height" />
                  <p className="pl-[18px] leading-[22px]">(Use Invert options)</p>
                </div>
              </Group>
              <Group title="Alpha Field" className="mt-[11px] h-[97px]">
                <div className="pt-1">
                  <Radio name="alpha" label="Unchanged" />
                  <Radio name="alpha" label="Height" checked />
                  <Radio name="alpha" label="Set to 0.0" />
                  <Radio name="alpha" label="Set to 1.0" />
                </div>
              </Group>
            </div>
          </div>
          <div className="mt-3 flex justify-end gap-[35px] pr-[9px]">
            <button className={buttonStyle}>OK</button>
            <button className={buttonStyle}>Cancel</button>
          </div>
        </div>
      </div>
    </div>
  );
}

// gradients shared by the toolbox, the adjustment icons and the logo
function Gradients() {
  return (
    <svg width="0" height="0" className="absolute" aria-hidden="true">
      <defs>
        <linearGradient id="toolGrad"><stop stopColor="#333" /><stop offset="1" stopColor="#eee" /></linearGradient>
        <linearGradient id="mapGrad"><stop stopColor="#fff" /><stop offset="1" stopColor="#111" /></linearGradient>
        <radialGradient id="ball"><stop stopColor="#eee" /><stop offset="1" stopColor="#888" /></radialGradient>
        <linearGradient id="nvGreen" x2="0" y2="1"><stop stopColor="#a5e01c" /><stop offset=".5" stopColor="#76c000" /><stop offset="1" stopColor="#4c9400" /></linearGradient>
      </defs>
    </svg>
  );
}

export default function App() {
  return (
    <div className="relative flex h-screen w-full flex-col overflow-hidden border border-[#858585] bg-[#d6d6d6] px-[3px] pt-px pb-[3px] font-['Noto_Sans','Noto_Sans_CJK_SC',sans-serif] shadow-[inset_0_0_0_2px_#ececec]">
      <Gradients />
      <MenuBar />
      <div className="flex min-h-0 flex-1 flex-col border-x border-b border-[#444]">
        <OptionsBar />
        <div className="flex min-h-0 flex-1 border-t border-[#777]">
          <Toolbox />
          <DocumentArea />
          <Dock />
        </div>
      </div>
      <NormalMapDialog />
    </div>
  );
}
